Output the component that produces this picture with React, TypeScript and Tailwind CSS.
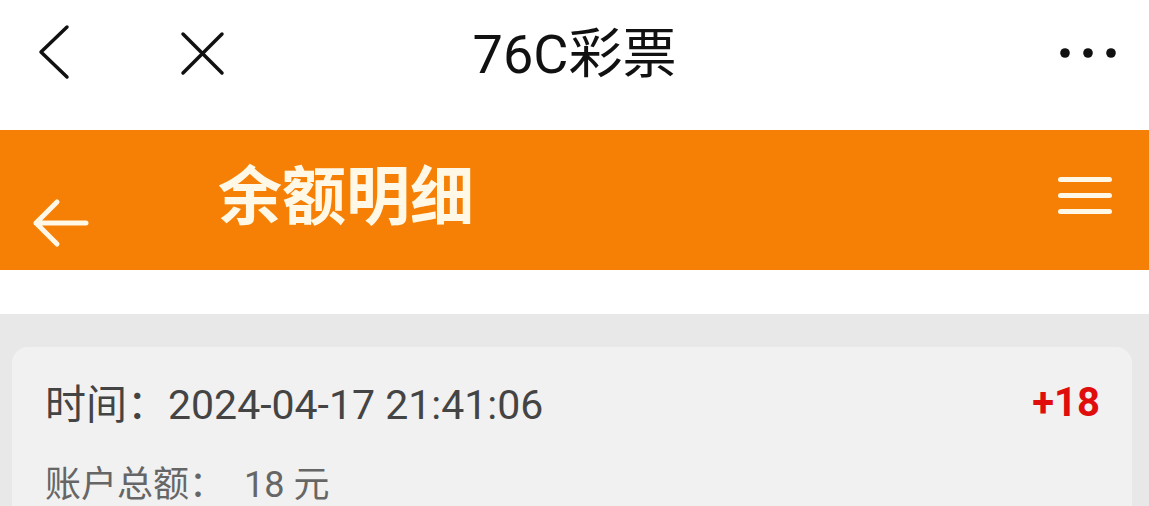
import React from "react";

const font = { fontFamily: '"Roboto", "Noto Sans CJK SC", sans-serif' };

const TopBar = () => (
  <div className="h-[130px] grid grid-cols-[1fr_auto_1fr] items-center bg-white">
    <div className="flex items-center -mt-[22px]">
      <svg width="100" height="60" viewBox="0 0 100 60" className="ml-[20px]">
        <polyline points="47,3 21,28 47,53" fill="none" stroke="#111" strokeWidth="3.5" strokeLinecap="round" strokeLinejoin="round" />
      </svg>
      <svg width="50" height="50" viewBox="0 0 50 50" className="ml-[57px] -mt-[2px]">
        <path d="M6 6 L45 45 M45 6 L6 45" stroke="#111" strokeWidth="3.5" strokeLinecap="round" />
      </svg>
    </div>
    <div className="text-[54px] text-[#111] leading-none -mt-[20px]">76C彩票</div>
    <div className="flex justify-end pr-[30px] -mt-[24px]">
      <svg width="60" height="12" viewBox="0 0 60 12">
        <circle cx="6" cy="6" r="4.8" fill="#111" />
        <circle cx="29" cy="6" r="4.8" fill="#111" />
        <circle cx="52" cy="6" r="4.8" fill="#111" />
      </svg>
    </div>
  </div>
);

const OrangeBar = () => (
  <div className="h-[140px] bg-[#f58005] flex items-center">
    <svg width="60" height="52" viewBox="0 0 60 52" className="ml-[31px] mt-[46px] shrink-0">
      <path d="M5 26 H55 M26 5 L5 26 L26 47" fill="none" stroke="#fff8e6" strokeWidth="5" strokeLinecap="round" strokeLinejoin="round" />
    </svg>
    <div className="ml-[127px] text-[64px] font-bold text-[#fff8e6] leading-none -mt-[4px]">余额明细</div>
    <div className="ml-auto mr-[37px] -mt-[10px] flex flex-col gap-[11px]">
      <div className="w-[54px] h-[5px] bg-[#fff8e6] rounded-sm" />
      <div className="w-[54px] h-[5px] bg-[#fff8e6] rounded-sm" />
      <div className="w-[54px] h-[5px] bg-[#fff8e6] rounded-sm" />
    </div>
  </div>
);

export default function App() {
  return (
    <div className="w-[1149px] h-[506px] overflow-hidden bg-white" style={font}>
      <TopBar />
      <OrangeBar />
      <div className="h-[44px] bg-white" />
      <div className="bg-[#e8e8e8] pt-[33px] pl-[12px] pr-[17px] h-[200px]">
        <div className="bg-[#f1f1f1] rounded-[16px] pl-[33px] pr-[32px] pt-[36px] h-[200px]">
          <div className="flex items-center justify-between h-[44px]">
            <div className="text-[41px] text-[#444] leading-none">
              时间：<span>2024-04-17 21:41:06</span>
            </div>
            <div className="text-[40px] font-bold text-[#e00d0d] leading-none -mt-[4px]">+18</div>
          </div>
          <div className="mt-[40px] text-[36px] text-[#666] leading-none">
            账户总额：<span className="ml-[19px]">18 元</span>
          </div>
        </div>
      </div>
    </div>
  );
}
